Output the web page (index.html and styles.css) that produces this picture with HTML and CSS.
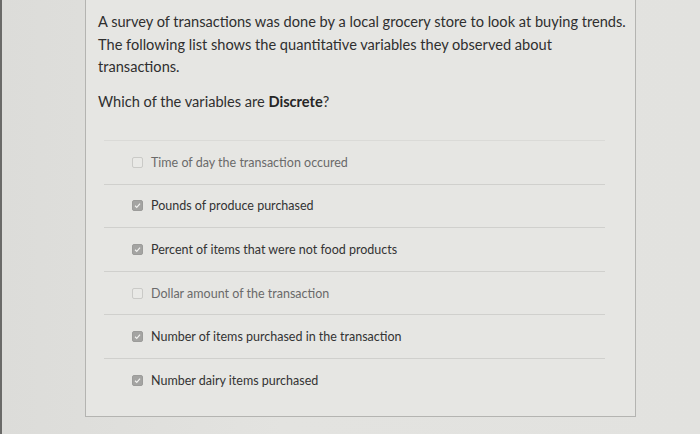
FILE: index.html
```html
<!DOCTYPE html>
<html>
<head>
<meta charset="utf-8">
<link rel="stylesheet" href="styles.css">
</head>
<body>
<div class="screen">
  <div class="card">
    <p class="intro">A survey of transactions was done by a local grocery store to look at buying trends. The following list shows the quantitative variables they observed about transactions.</p>
    <p class="question">Which of the variables are <strong>Discrete</strong>?</p>
    <ul class="options">
      <li class="option"><span class="box"></span><span class="label dim">Time of day the transaction occured</span></li>
      <li class="option"><span class="box checked"><svg viewBox="0 0 11 11"><path d="M2.5 5.8 L4.6 7.8 L8.6 3.2" fill="none" stroke="#f2f2f0" stroke-width="1.4"/></svg></span><span class="label">Pounds of produce purchased</span></li>
      <li class="option"><span class="box checked"><svg viewBox="0 0 11 11"><path d="M2.5 5.8 L4.6 7.8 L8.6 3.2" fill="none" stroke="#f2f2f0" stroke-width="1.4"/></svg></span><span class="label">Percent of items that were not food products</span></li>
      <li class="option"><span class="box"></span><span class="label dim">Dollar amount of the transaction</span></li>
      <li class="option"><span class="box checked"><svg viewBox="0 0 11 11"><path d="M2.5 5.8 L4.6 7.8 L8.6 3.2" fill="none" stroke="#f2f2f0" stroke-width="1.4"/></svg></span><span class="label">Number of items purchased in the transaction</span></li>
      <li class="option"><span class="box checked"><svg viewBox="0 0 11 11"><path d="M2.5 5.8 L4.6 7.8 L8.6 3.2" fill="none" stroke="#f2f2f0" stroke-width="1.4"/></svg></span><span class="label">Number dairy items purchased</span></li>
    </ul>
  </div>
</div>
</body>
</html>
```

FILE: styles.css
```css
html, body {
  margin: 0;
  padding: 0;
  height: 100%;
}
body {
  background: #e0e0dd;
  font-family: Lato, "Open Sans", sans-serif;
  color: #2f2f2f;
}
.screen {
  height: 434px;
  border-left: 2px solid #6a6a68;
  box-sizing: border-box;
  padding-left: 83px;
  background: linear-gradient(90deg, #dcdcd9 0%, #e3e3e0 40%, #e2e2df 100%);
}
.card {
  width: 551px;
  height: 417px;
  box-sizing: border-box;
  border: 1px solid #b4b4b1;
  border-top: none;
  background: #e6e6e3;
  padding: 11px 8px 0 12px;
}
.intro {
  margin: 0;
  font-size: 14.6px;
  line-height: 22.5px;
}
.question {
  margin: 12px 0 0 0;
  font-size: 14.6px;
  line-height: 22.5px;
}
.question strong {
  font-weight: 700;
  color: #262626;
}
.options {
  list-style: none;
  margin: 27px 22px 0 6px;
  padding: 0;
}
.option {
  display: flex;
  align-items: center;
  height: 43.6px;
  box-sizing: border-box;
  border-top: 1px solid #d0d0cd;
  padding-left: 28px;
  gap: 8px;
  font-size: 12.5px;
}
.option:first-child {
  border-top-color: #dadad7;
}
.box {
  width: 11px;
  height: 11px;
  box-sizing: border-box;
  border: 1px solid #cacac7;
  border-radius: 2px;
  background: #e9e9e6;
  display: flex;
}
.box.checked {
  background: #a4a4a2;
  border-color: #9c9c9a;
}
.box svg {
  width: 100%;
  height: 100%;
}
.label {
  color: #333;
}
.label.dim {
  color: #6a6a6a;
}
```
